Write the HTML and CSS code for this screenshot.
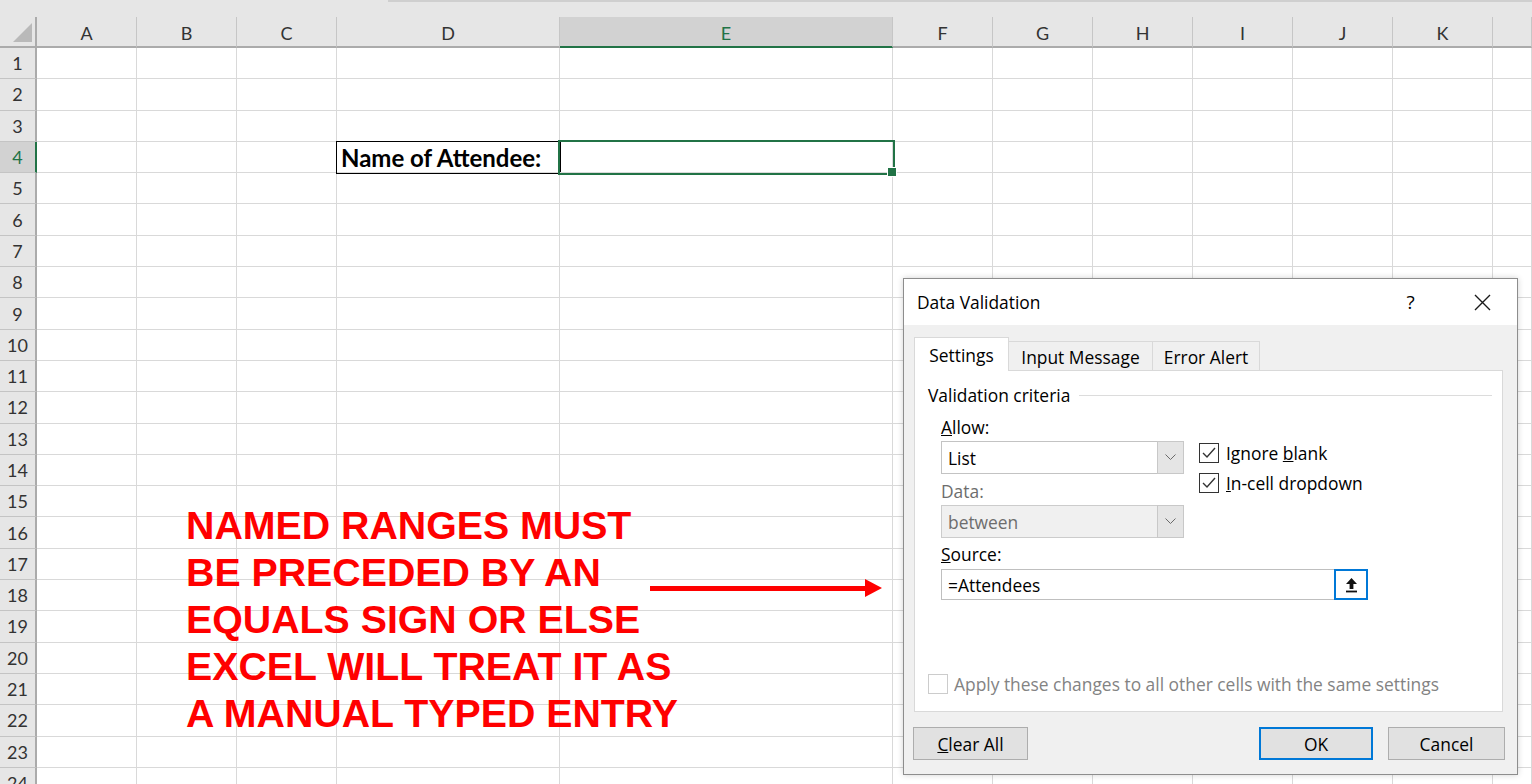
FILE: index.html
```html
<!DOCTYPE html>
<html>
<head>
    <title>Book1 - Excel</title>
    <link rel="stylesheet" href="styles.css">
</head>
<body>
    <div class="ribbon-edge"><div class="formula-line"></div></div>
    <div class="sheet" id="sheet"></div>

    <div class="note">NAMED RANGES MUST<br>BE PRECEDED BY AN<br>EQUALS SIGN OR ELSE<br>EXCEL WILL TREAT IT AS<br>A MANUAL TYPED ENTRY</div>
    <div class="arrow">
        <div class="arrow-line"></div>
        <svg width="17" height="18" viewBox="0 0 17 18"><polygon points="0,0 17,9 0,18" fill="#ff0000"/></svg>
    </div>

    <div class="dialog">
        <div class="dialog-title">
            <span class="title-text">Data Validation</span>
            <span class="title-btn">?</span>
            <span class="title-btn">
                <svg width="17" height="17" viewBox="0 0 17 17"><path d="M1 1L16 16M16 1L1 16" stroke="#1a1a1a" stroke-width="1.4"/></svg>
            </span>
        </div>
        <div class="dialog-body">
            <div class="tabs">
                <div class="tab active">Settings</div>
                <div class="tab">Input Message</div>
                <div class="tab">Error Alert</div>
            </div>
            <div class="panel">
                <div class="legend"><span>Validation criteria</span><div class="legend-rule"></div></div>
                <div class="criteria">
                    <div class="criteria-left">
                        <div class="field-label"><u>A</u>llow:</div>
                        <div class="select">
                            <span class="select-value">List</span>
                            <span class="select-btn"><svg width="11" height="7" viewBox="0 0 11 7"><polyline points="0.5,0.5 5.5,5.5 10.5,0.5" fill="none" stroke="#6a6a6a" stroke-width="1"/></svg></span>
                        </div>
                        <div class="field-label disabled">Data:</div>
                        <div class="select disabled">
                            <span class="select-value">between</span>
                            <span class="select-btn"><svg width="11" height="7" viewBox="0 0 11 7"><polyline points="0.5,0.5 5.5,5.5 10.5,0.5" fill="none" stroke="#6a6a6a" stroke-width="1"/></svg></span>
                        </div>
                    </div>
                    <div class="criteria-right">
                        <div class="check">
                            <span class="box"><svg width="18" height="18" viewBox="0 0 18 18"><polyline points="3,9 7,13 15,4" fill="none" stroke="#333" stroke-width="1.4"/></svg></span>
                            <span>Ignore <u>b</u>lank</span>
                        </div>
                        <div class="check">
                            <span class="box"><svg width="18" height="18" viewBox="0 0 18 18"><polyline points="3,9 7,13 15,4" fill="none" stroke="#333" stroke-width="1.4"/></svg></span>
                            <span><u>I</u>n-cell dropdown</span>
                        </div>
                    </div>
                </div>
                <div class="source">
                    <div class="field-label"><u>S</u>ource:</div>
                    <div class="source-input">
                        <span class="select-value">=Attendees</span>
                        <span class="ref-btn"><svg width="13" height="16" viewBox="0 0 13 16"><path d="M6.5 1L12 7H8.4V12H4.6V7H1Z" fill="#111"/><rect x="1" y="13.6" width="11" height="1.8" fill="#111"/></svg></span>
                    </div>
                </div>
                <div class="check apply">
                    <span class="box"></span>
                    <span>Apply these changes to all other cells with the same settings</span>
                </div>
            </div>
            <div class="buttons">
                <div class="btn clear"><span><u>C</u>lear All</span></div>
                <div class="btn ok">OK</div>
                <div class="btn cancel">Cancel</div>
            </div>
        </div>
    </div>

    <script>
        const columns = ['A', 'B', 'C', 'D', 'E', 'F', 'G', 'H', 'I', 'J', 'K', ''];
        const sheet = document.getElementById('sheet');

        function addCell(className, text) {
            const div = document.createElement('div');
            div.className = className;
            if (text) div.textContent = text;
            sheet.appendChild(div);
            return div;
        }

        addCell('corner');
        columns.forEach(col => addCell(col === 'E' ? 'col-head selected' : 'col-head', col));

        for (let row = 1; row <= 24; row++) {
            addCell(row === 4 ? 'row-head selected' : 'row-head', String(row));
            columns.forEach(col => {
                const cell = addCell('cell');
                if (row === 4 && col === 'D') {
                    cell.classList.add('label');
                    cell.textContent = 'Name of Attendee:';
                }
                if (row === 4 && col === 'E') {
                    cell.classList.add('active');
                }
            });
        }
    </script>
</body>
</html>
```

FILE: styles.css
```css
* {
    margin: 0;
    padding: 0;
    box-sizing: border-box;
}

body {
    width: 1532px;
    height: 784px;
    overflow: hidden;
    background: #fff;
    font-family: 'Lato', sans-serif;
}

/* strip left over from the formula bar */
.ribbon-edge {
    height: 17px;
    background: #e6e6e6;
}

.formula-line {
    margin-left: 388px;
    height: 2px;
    background: #cfcfcf;
}

/* worksheet grid */
.sheet {
    display: grid;
    grid-template-columns: 37px 100px 100px 100px 223px 333px repeat(6, 100px) 1fr;
    grid-template-rows: 31px;
    grid-auto-rows: 31.3px;
}

.corner {
    background: #e6e6e6;
    border-right: 2px solid #ababab;
    border-bottom: 2px solid #ababab;
    position: relative;
}

.corner::after {
    content: '';
    position: absolute;
    right: 3px;
    bottom: 4px;
    width: 19px;
    height: 19px;
    background: #b9b9b9;
    clip-path: polygon(100% 0, 100% 100%, 0 100%);
}

.col-head {
    background: #e6e6e6;
    border-right: 1px solid #c6c6c6;
    border-bottom: 2px solid #ababab;
    color: #333;
    font-size: 18px;
    display: flex;
    align-items: center;
    justify-content: center;
    padding-top: 2px;
}

.col-head.selected {
    background: #d2d2d2;
    color: #217346;
    border-bottom-color: #217346;
}

.row-head {
    background: #e6e6e6;
    border-right: 2px solid #ababab;
    border-bottom: 1px solid #c4c4c4;
    color: #333;
    font-size: 18px;
    display: flex;
    align-items: center;
    justify-content: center;
}

.row-head.selected {
    background: #d2d2d2;
    color: #217346;
    border-right-color: #217346;
}

.cell {
    border-right: 1px solid #d9d9d9;
    border-bottom: 1px solid #d9d9d9;
}

.cell.label {
    outline: 1px solid #000;
    font-weight: bold;
    font-size: 24px;
    color: #000;
    display: flex;
    align-items: center;
    padding-left: 4px;
    padding-top: 1px;
    position: relative;
    z-index: 1;
}

.cell.active {
    outline: 2px solid #217346;
    position: relative;
    z-index: 2;
}

.cell.active::after {
    content: '';
    position: absolute;
    right: -5px;
    bottom: -5px;
    width: 8px;
    height: 8px;
    background: #217346;
    border: 1px solid #fff;
}

/* red annotation over the sheet */
.note {
    position: absolute;
    left: 186px;
    top: 502px;
    font-family: 'Liberation Sans', Arial, sans-serif;
    font-weight: bold;
    font-size: 39.3px;
    line-height: 47px;
    color: #ff0000;
    white-space: nowrap;
}

.arrow {
    position: absolute;
    left: 650px;
    top: 579px;
    width: 232px;
    height: 18px;
    display: flex;
    align-items: center;
}

.arrow-line {
    flex: 1;
    height: 5px;
    background: #ff0000;
}

.arrow svg {
    display: block;
}

/* Data Validation window */
.dialog {
    position: absolute;
    left: 903px;
    top: 278px;
    width: 615px;
    height: 497px;
    border: 1px solid #8d8d8d;
    box-shadow: 0 0 6px rgba(0, 0, 0, 0.18);
    font-family: 'Open Sans', sans-serif;
    font-size: 17.4px;
    color: #000;
    display: flex;
    flex-direction: column;
}

.dialog-title {
    height: 46px;
    background: #fff;
    display: flex;
    align-items: center;
}

.title-text {
    flex: 1;
    padding-left: 13px;
}

.title-btn {
    width: 70px;
    height: 100%;
    display: flex;
    align-items: center;
    justify-content: center;
    font-size: 19px;
}

.title-btn:nth-child(2) {
    padding-right: 3px;
}

.dialog-body {
    flex: 1;
    background: #f0f0f0;
    padding: 12px 14px 14px 10px;
    display: flex;
    flex-direction: column;
}

.tabs {
    display: flex;
    align-items: flex-end;
    height: 33px;
}

.tab {
    height: 29px;
    border: 1px solid #d9d9d9;
    border-bottom: none;
    border-left: none;
    display: flex;
    align-items: center;
    justify-content: center;
    padding-top: 1px;
}

.tab:nth-child(2) { width: 144px; }
.tab:nth-child(3) { width: 107px; }

.tab.active {
    width: 95px;
    height: 34px;
    margin-bottom: -1px;
    background: #fff;
    border-left: 1px solid #d9d9d9;
    position: relative;
    z-index: 1;
}

.panel {
    height: 342px;
    background: #fff;
    border: 1px solid #d9d9d9;
    padding: 0 10px 17px 13px;
    display: flex;
    flex-direction: column;
}

.legend {
    margin-top: 13px;
    height: 22px;
    display: flex;
    align-items: center;
}

.legend-rule {
    flex: 1;
    height: 1px;
    background: #dcdcdc;
    margin-left: 9px;
}

.criteria {
    display: flex;
    padding-left: 13px;
    margin-top: 10px;
}

.criteria-left {
    width: 243px;
}

.criteria-right {
    margin-left: 15px;
    padding-top: 27px;
    display: flex;
    flex-direction: column;
    gap: 10px;
}

.field-label {
    height: 22px;
    line-height: 22px;
}

.field-label.disabled {
    color: #6d6d6d;
    margin-top: 6px;
}

.select {
    height: 33px;
    margin-top: 3px;
    border: 1px solid #c3c3c3;
    background: #fff;
    display: flex;
}

.select.disabled {
    background: #f0f0f0;
    border-color: #cccccc;
    color: #6d6d6d;
}

.select-value {
    flex: 1;
    padding-left: 6px;
    display: flex;
    align-items: center;
}

.select-btn {
    width: 27px;
    margin: -1px -1px -1px 0;
    background: #e5e5e5;
    border: 1px solid #c8c8c8;
    display: flex;
    align-items: center;
    justify-content: center;
}

.check {
    display: flex;
    align-items: center;
    gap: 7px;
    height: 20px;
}

.box {
    width: 20px;
    height: 20px;
    border: 1.5px solid #333;
    background: #fff;
    display: flex;
    align-items: center;
    justify-content: center;
}

.source {
    padding-left: 13px;
    margin-top: 5px;
}

.source-input {
    width: 427px;
    height: 31px;
    margin-top: 4px;
    border: 1px solid #bfbfbf;
    background: #fff;
    display: flex;
}

.ref-btn {
    width: 34px;
    margin: -1px -1px -1px 0;
    border: 2px solid #0078d7;
    background: #fff;
    display: flex;
    align-items: center;
    justify-content: center;
}

.check.apply {
    margin-top: auto;
    color: #838383;
    gap: 6px;
}

.check.apply .box {
    border: 1px solid #cccccc;
}

.buttons {
    display: flex;
    margin-top: 15px;
    margin-right: -2px;
    gap: 15px;
}

.btn {
    height: 33px;
    border: 1px solid #adadad;
    background: #e1e1e1;
    display: flex;
    align-items: center;
    justify-content: center;
}

.btn.clear { width: 115px; margin-left: -1px; }
.btn.ok { width: 114px; margin-left: auto; border: 2px solid #0078d7; }
.btn.cancel { width: 117px; }
```
